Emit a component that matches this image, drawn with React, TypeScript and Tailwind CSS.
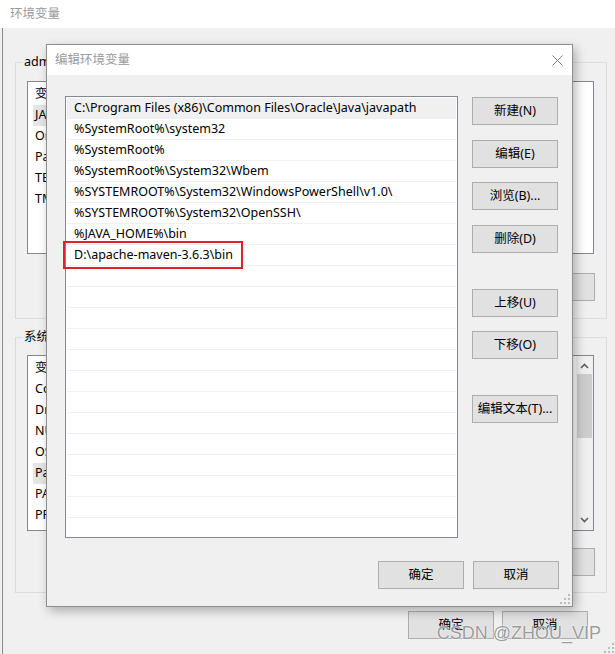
import React from 'react'

const pathItems = [
  "C:\\Program Files (x86)\\Common Files\\Oracle\\Java\\javapath",
  "%SystemRoot%\\system32",
  "%SystemRoot%",
  "%SystemRoot%\\System32\\Wbem",
  "%SYSTEMROOT%\\System32\\WindowsPowerShell\\v1.0\\",
  "%SYSTEMROOT%\\System32\\OpenSSH\\",
  "%JAVA_HOME%\\bin",
  "D:\\apache-maven-3.6.3\\bin",
]

const userVars = ["JAVA_HOME", "OneDrive", "Path", "TEMP", "TMP"]
const sysVars = ["ComSpec", "DriverData", "NUMBER_OF_PROCESSORS", "OS", "Path", "PATHEXT", "PROCESSOR_ARCHITECTURE"]

function WinButton({ text, className = "" }: { text: string; className?: string }) {
  return (
    <button className={`h-[28px] w-[86px] shrink-0 border border-[#adadad] bg-[#e1e1e1] text-[12.5px] text-black ${className}`}>
      {text}
    </button>
  )
}

function Grip() {
  return (
    <svg width="10" height="10" viewBox="0 0 10 10">
      <rect x="8" y="0" width="2" height="2" fill="#bcbcbc" />
      <rect x="4" y="4" width="2" height="2" fill="#bcbcbc" />
      <rect x="8" y="4" width="2" height="2" fill="#bcbcbc" />
      <rect x="0" y="8" width="2" height="2" fill="#bcbcbc" />
      <rect x="4" y="8" width="2" height="2" fill="#bcbcbc" />
      <rect x="8" y="8" width="2" height="2" fill="#bcbcbc" />
    </svg>
  )
}

function VarList({ rows, selected, height, scroll }: { rows: string[]; selected: number; height: string; scroll?: boolean }) {
  return (
    <div className={`flex ${height} w-[567px] border border-[#828790] bg-white overflow-hidden`}>
      <div className="flex-1 pt-[2px] pl-[5px]">
        <div className="flex h-[21px] items-center pl-[2px]">
          <span className="w-[150px]">变量</span>
          <span>值</span>
        </div>
        {rows.map((r, i) => (
          <div key={r} className="flex h-[21px] items-center">
            <span className={`w-[150px] h-full flex items-center pl-[2px] ${i === selected ? 'bg-[#e5e5e5]' : ''}`}>{r}</span>
          </div>
        ))}
      </div>
      {scroll && (
        <div className="flex w-[17px] flex-col items-center bg-[#f0f0f0] pt-[7px]">
          <svg width="9" height="6" viewBox="0 0 9 6"><path d="M1 5 L4.5 1.5 L8 5" stroke="#606060" strokeWidth="1.6" fill="none" /></svg>
          <div className="mt-[5px] h-[64px] w-[15px] bg-[#cdcdcd]" />
          <div className="flex-1" />
          <svg width="9" height="6" viewBox="0 0 9 6" className="mb-[7px]"><path d="M1 1 L4.5 4.5 L8 1" stroke="#606060" strokeWidth="1.6" fill="none" /></svg>
        </div>
      )}
    </div>
  )
}

export default function App() {
  const rows = Array.from({ length: 21 }, (_, i) => pathItems[i] ?? "")

  return (
    <div className="relative h-[654px] w-[615px] overflow-hidden bg-[#f0f0f0] font-['Noto_Sans','Noto_Sans_CJK_SC',sans-serif] text-[12.5px] text-black">
      {/* background window */}
      <div className="flex h-full flex-col">
        <div className="flex h-[28px] shrink-0 items-center bg-white pl-[10px] text-[12.5px] text-[#9a9a9a]">环境变量</div>
        <div className="ml-[2px] flex flex-1 flex-col border-l border-[#8a8a8a] pl-[12px]">
          <fieldset className="mt-[26px] w-[592px] border border-[#dcdcdc] px-[11px] pb-[17px]">
            <legend className="ml-[-4px] h-[16px] px-[1px] leading-[16px]">administrator 的用户变量(U)</legend>
            <div className="mt-[11px]">
              <VarList rows={userVars} selected={0} height="h-[173px]" />
            </div>
            <div className="mt-[19px] flex justify-end gap-[9px]">
              <WinButton text="新建(N)..." className="h-[27px]" />
              <WinButton text="编辑(E)..." className="h-[27px]" />
              <WinButton text="删除(D)" className="h-[27px]" />
            </div>
          </fieldset>
          <fieldset className="mt-[10px] w-[592px] border border-[#dcdcdc] px-[11px] pb-[16px]">
            <legend className="ml-[-4px] h-[16px] px-[1px] leading-[16px]">系统变量(S)</legend>
            <div className="mt-[10px]">
              <VarList rows={sysVars} selected={4} height="h-[176px]" scroll />
            </div>
            <div className="mt-[17px] flex justify-end gap-[9px]">
              <WinButton text="新建(W)..." className="h-[27px]" />
              <WinButton text="编辑(I)..." className="h-[27px]" />
              <WinButton text="删除(L)" className="h-[27px]" />
            </div>
          </fieldset>
          <div className="mt-[18px] flex justify-end gap-[8px] pr-[27px]">
            <WinButton text="确定" />
            <WinButton text="取消" />
          </div>
        </div>
      </div>
      <div className="absolute bottom-[1px] right-[1px]"><Grip /></div>

      {/* edit dialog */}
      <div className="absolute left-[46px] top-[44px] flex h-[563px] w-[527px] flex-col border border-[#8f8f8f] bg-[#f0f0f0] shadow-[3px_4px_10px_rgba(0,0,0,0.28)]">
        <div className="flex h-[30px] shrink-0 items-center justify-between bg-white pl-[8px] pr-[9px]">
          <span className="text-[12.5px] text-[#9a9a9a]">编辑环境变量</span>
          <svg width="11" height="11" viewBox="0 0 11 11">
            <path d="M0.5 0.5 L10.5 10.5 M10.5 0.5 L0.5 10.5" stroke="#7a7a7a" strokeWidth="1" />
          </svg>
        </div>
        <div className="flex pl-[18px] pt-[21px]">
          <div className="h-[442px] w-[393px] overflow-hidden border border-[#828790] bg-white pl-[1px] pr-[1px] pt-[1px]">
            {rows.map((r, i) => (
              <div
                key={i}
                className={`flex h-[21px] items-center whitespace-nowrap border-b border-[#f0f0f0] pl-[7px] ${i === 0 ? 'bg-[#f0f0f0]' : ''}`}
              >
                {r}
              </div>
            ))}
          </div>
          <div className="ml-[14px] flex flex-col">
            <WinButton text="新建(N)" className="mt-[1px]" />
            <WinButton text="编辑(E)" className="mt-[15px]" />
            <WinButton text="浏览(B)..." className="mt-[14px]" />
            <WinButton text="删除(D)" className="mt-[15px]" />
            <WinButton text="上移(U)" className="mt-[36px]" />
            <WinButton text="下移(O)" className="mt-[14px]" />
            <WinButton text="编辑文本(T)..." className="mt-[36px]" />
          </div>
        </div>
        <div className="mt-[23px] flex justify-end gap-[9px] pr-[13px]">
          <WinButton text="确定" />
          <WinButton text="取消" />
        </div>
        <div className="absolute bottom-[2px] right-[2px]"><Grip /></div>
        {/* red annotation */}
        <div className="absolute left-[16px] top-[196px] h-[28px] w-[180px] border-2 border-[#e0202a]" />
      </div>

      {/* watermark */}
      <div className="absolute bottom-[7px] right-[14px] font-['Liberation_Sans',sans-serif] text-[18px] text-[#9c9c9c] [text-shadow:0_0_2px_#ffffff,0_0_1px_#ffffff]">
        CSDN @ZHOU_VIP
      </div>
    </div>
  )
}
